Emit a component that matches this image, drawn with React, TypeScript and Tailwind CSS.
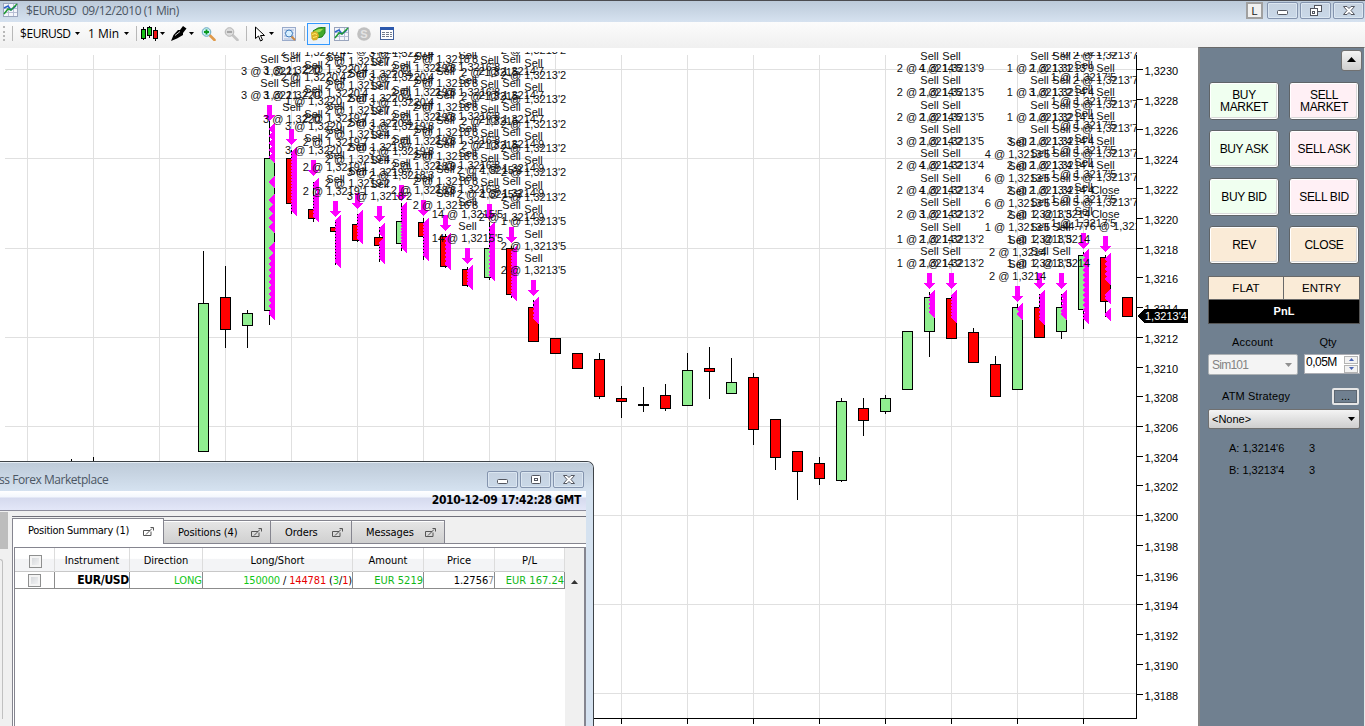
import React from "react";

type Candle = [x: number, top: number, bottom: number, wickTop: number, wickBottom: number, color: "g" | "r" | "k"];

const candles: Candle[] = [
  [203, 303, 452, 251, 452, "g"],
  [225, 297, 330, 266, 348, "r"],
  [247, 313, 326, 310, 348, "g"],
  [269, 158, 311, 121, 325, "g"],
  [291, 158, 204, 150, 214, "r"],
  [313, 209, 219, 182, 222, "r"],
  [335, 227, 232, 221, 265, "r"],
  [357, 224, 241, 214, 242, "r"],
  [379, 237, 246, 227, 262, "r"],
  [401, 221, 244, 203, 251, "g"],
  [423, 222, 237, 218, 260, "r"],
  [445, 236, 267, 234, 268, "r"],
  [467, 269, 286, 267, 287, "r"],
  [489, 248, 278, 222, 280, "g"],
  [511, 248, 295, 246, 298, "r"],
  [533, 307, 342, 300, 342, "r"],
  [555, 338, 354, 338, 354, "r"],
  [577, 353, 369, 353, 369, "r"],
  [599, 359, 397, 353, 399, "r"],
  [621, 398, 402, 386, 418, "r"],
  [643, 404, 406, 387, 412, "k"],
  [665, 395, 409, 384, 411, "r"],
  [687, 370, 406, 353, 406, "g"],
  [709, 368, 372, 347, 399, "r"],
  [731, 382, 394, 358, 394, "g"],
  [753, 377, 430, 373, 445, "r"],
  [775, 419, 458, 419, 470, "r"],
  [797, 451, 472, 451, 500, "r"],
  [819, 463, 479, 457, 485, "r"],
  [841, 401, 481, 398, 482, "g"],
  [863, 408, 421, 398, 436, "r"],
  [885, 398, 412, 395, 414, "g"],
  [907, 331, 390, 331, 390, "g"],
  [929, 297, 332, 292, 357, "g"],
  [951, 298, 339, 296, 339, "r"],
  [973, 332, 363, 328, 363, "r"],
  [995, 364, 397, 356, 397, "r"],
  [1017, 307, 390, 304, 390, "g"],
  [1039, 307, 338, 294, 338, "r"],
  [1061, 307, 332, 294, 339, "g"],
  [1083, 255, 310, 252, 329, "g"],
  [1105, 257, 302, 255, 317, "r"],
  [1127, 297, 317, 297, 317, "r"],
];

const fill = { g: "#90ee90", r: "#ff0000", k: "#000000" };

// labels are listed from the bottom one up, the last one repeats to the top of the chart
type Fill = { x: number; arrow: number; runs: [number, number, number][]; labels: string[]; max?: number };

const fills: Fill[] = [
  { x: 269, arrow: 105, runs: [[122, 164, 7], [175, 189, 8], [193, 234, 9], [241, 253, 8], [251, 321, 6]], labels: ["3 @ 1,3221"], max: 2 },
  { x: 291, arrow: 129, runs: [[146, 217, 3]], labels: ["3 @ 1,3220", "3 @ 1,3220", "3 @ 1,3220"], max: 3 },
  { x: 313, arrow: 160, runs: [[177, 194, 5], [190, 223, 3]], labels: ["3 @ 1,3220", "3 @ 1,3220", "1 @ 1,3220", "2 @ 1,3220'4"] },
  { x: 335, arrow: 201, runs: [[214, 269, 3]], labels: ["2 @ 1,3219'1", "2 @ 1,3219'1", "2 @ 1,3219'7", "2 @ 1,3219'7", "2 @ 1,3220'4"] },
  { x: 357, arrow: 193, runs: [[209, 245, 3]], labels: ["2 @ 1,3219'2", "2 @ 1,3219'4", "2 @ 1,3219'4", "2 @ 1,3219'7"] },
  { x: 379, arrow: 206, runs: [[222, 240, 5], [236, 265, 3]], labels: ["3 @ 1,3218'2", "3 @ 1,3219'7", "2 @ 1,3219'7", "2 @ 1,3220'4"] },
  { x: 401, arrow: 185, runs: [[201, 254, 3]], labels: ["2 @ 1,3218'3", "3 @ 1,3219'8", "3 @ 1,3219'8", "3 @ 1,3220'4"] },
  { x: 423, arrow: 200, runs: [[217, 262, 3]], labels: ["2 @ 1,3218'8", "2 @ 1,3218'9", "2 @ 1,3219'8"] },
  { x: 445, arrow: 215, runs: [[232, 271, 4]], labels: ["2 @ 1,3216'8", "2 @ 1,3216'8", "2 @ 1,3218'8"] },
  { x: 467, arrow: 248, runs: [[264, 291, 3]], labels: ["14 @ 1,3215'5", "14 @ 1,3215'5", "2 @ 1,3216'8"] },
  { x: 489, arrow: 204, runs: [[221, 282, 4]], labels: ["2 @ 1,3215'3", "2 @ 1,3215'3", "2 @ 1,3215"] },
  { x: 511, arrow: 227, runs: [[245, 302, 3]], labels: ["2 @ 1,3214'9", "2 @ 1,3214'9", "2 @ 1,3214'9", "2 @ 1,3214'9", "2 @ 1,3214'7"] },
  { x: 533, arrow: 280, runs: [[296, 325, 4]], labels: ["2 @ 1,3213'5", "2 @ 1,3213'5", "1 @ 1,3213'5", "2 @ 1,3213'2"] },
  { x: 929, arrow: 273, runs: [[289, 319, 4]], labels: ["1 @ 1,3214'2", "1 @ 1,3214'2", "2 @ 1,3214'2", "2 @ 1,3214'2", "2 @ 1,3214'2", "3 @ 1,3214'2", "2 @ 1,3214'5", "2 @ 1,3214'5", "2 @ 1,3214'5"] },
  { x: 951, arrow: 273, runs: [[289, 324, 3]], labels: ["2 @ 1,3213'2", "2 @ 1,3213'2", "3 @ 1,3213'2", "4 @ 1,3213'4", "4 @ 1,3213'4", "2 @ 1,3213'5", "2 @ 1,3213'5", "2 @ 1,3213'5", "4 @ 1,3213'9"] },
  { x: 1017, arrow: 286, runs: [[302, 321, 9]], labels: ["2 @ 1,3214", "2 @ 1,3214", "1 @ 1,3213'5", "6 @ 1,3213'5", "6 @ 1,3213'5", "4 @ 1,3213'5"], max: 6 },
  { x: 1039, arrow: 273, runs: [[289, 326, 4]], labels: ["1 @ 1,3213'5", "1 @ 1,3213'5", "2 @ 1,3213'5", "2 @ 1,3213'4", "2 @ 1,3213'4", "3 @ 1,3213'4", "1 @ 1,3213'2", "1 @ 1,3213'2", "1 @ 1,3213'1"] },
  { x: 1061, arrow: 273, runs: [[289, 321, 5]], labels: ["2 @ 1,3214", "2 @ 1,3214", "2 @ 1,3214", "2 @ 1,3214'4", "2 @ 1,3214'4", "2 @ 1,3214'4", "2 @ 1,3214'4", "3 @ 1,3214'4", "2 @ 1,3213'9"] },
  { x: 1083, arrow: 233, runs: [[248, 325, 5]], labels: ["1 @ 1,3217'5"] },
  { x: 1105, arrow: 236, runs: [[252, 286, 5], [288, 305, 6], [307, 322, 15]], labels: ["144.776 @ 1,3213'4", "5 @ 1,3213'7", "5 @ 1,3213'7", "5 @ 1,3213'7", "5 @ 1,3213'7", "5 @ 1,3213'7", "2 @ 1,3213'7"] },
];

const prices = Array.from({ length: 22 }, (_, i) => `1,${3230 - i * 2}`);
const gridX = Array.from({ length: 17 }, (_, i) => 27 + i * 66);
const gridY = [69, 158, 248, 337, 426, 515, 604, 693];

function Markers({ x, runs }: { x: number; runs: [number, number, number][] }) {
  const shapes: string[] = [];
  runs.forEach(([from, to, step]) => {
    const last = Math.max(from, to - 14);
    for (let y = from; y < last + step; y += step) {
      const top = Math.min(y, last);
      shapes.push(`M${x + 6} ${top}V${top + 14}L${x} ${top + 7}Z`);
    }
  });
  return <path d={shapes.join("")} fill="#ff00ff" />;
}

function Labels({ x, arrow, labels, max = 20 }: Fill) {
  const rows = [];
  for (let i = 0; i < max; i++) {
    const y = Math.round(arrow - 6 - i * 24.4);
    if (y < 54) break;
    const closing = x === 1105 && i < 2;
    rows.push(
      <g key={i}>
        <text x={x + 0.5} y={y}>{labels[Math.min(i, labels.length - 1)]}</text>
        {y - 12 > 53 && <text x={x + 0.5} y={y - 12}>{closing ? "Close" : "Sell"}</text>}
      </g>
    );
  }
  return <>{rows}</>;
}

function Chart() {
  return (
    <svg width="1198" height="679" viewBox="0 47 1198 679" className="block shrink-0 bg-white" fontFamily="Liberation Sans, sans-serif" fontSize="11" shapeRendering="crispEdges">
      <rect x="0" y="47" width="1198" height="1" fill="#f0f0f0" />
      <g fill="#e0e0e0">
        {gridX.map((x) => <rect key={x} x={x} y="55" width="1" height="663" />)}
        {gridY.map((y) => <rect key={y} x="5" y={y} width="1132" height="1" />)}
      </g>
      <rect x="71" y="459" width="1" height="3" />
      <rect x="93" y="457" width="1" height="5" />
      <clipPath id="plot">
        <rect x="0" y="52" width="1137" height="674" />
      </clipPath>
      <g clipPath="url(#plot)">
        {candles.map(([x, top, bottom, wickTop, wickBottom, color]) => (
          <g key={x}>
            <rect x={x} y={wickTop} width="1" height={wickBottom - wickTop} />
            <rect x={x - 4.5} y={top + 0.5} width="10" height={bottom - top - 1} fill={fill[color]} stroke="#000" />
          </g>
        ))}
        {fills.map((f) => (
          <g key={f.x}>
            <Markers x={f.x} runs={f.runs} />
            <path d={`M${f.x - 2} ${f.arrow}h5v10h3l-5.5 6l-5.5 -6h3z`} fill="#ff00ff" />
          </g>
        ))}
        <g textAnchor="middle" fill="#111">
          {fills.map((f) => <Labels key={f.x} {...f} />)}
        </g>
      </g>
      <rect x="1136" y="55" width="1" height="664" />
      <rect x="5" y="718" width="1132" height="1" />
      {gridX.map((x) => <rect key={x} x={x} y="718" width="1" height="6" />)}
      {prices.map((p, i) => {
        const y = Math.round(69.1 + i * 29.74);
        return (
          <g key={p}>
            <rect x="1137" y={y} width="6" height="1" />
            <text x="1144.500" y={y + 6}>{p}</text>
          </g>
        );
      })}
      <path d="M1137 316l8 -7h43v14h-43z" />
      <text x="1145" y="320" fill="#fff">1,3213'4</text>
    </svg>
  );
}

function ChartIcon() {
  return (
    <svg width="15" height="14" viewBox="0 0 15 14" className="shrink-0">
      <rect x=".5" y=".5" width="14" height="13" fill="#f4f6fb" stroke="#9aa5bd" />
      <path d="M1 5.500h13M1 9.500h13M5.500 1v12M10.500 1v12" stroke="#b9c0d6" />
      <path d="M1 5l4-2 3 4 5-4" stroke="#2c62c8" strokeWidth="1.500" fill="none" />
      <path d="M1 11l4-5 3 1 6-6" stroke="#209a32" strokeWidth="1.500" fill="none" />
    </svg>
  );
}

function Magnifier({ plus }: { plus?: boolean }) {
  return (
    <svg width="15" height="14" viewBox="0 0 15 14" className="shrink-0">
      <path d="M9 8.500l4.500 4.500" stroke={plus ? "#e09a4a" : "#c4c4c4"} strokeWidth="2.600" strokeLinecap="round" />
      <circle cx="5.500" cy="5" r="4.300" fill={plus ? "#c4ecf2" : "#dcdcdc"} stroke={plus ? "#6aa8c0" : "#b4b4b4"} />
      <path d={plus ? "M5.500 2.500v5M3 5h5" : "M3 5h5"} stroke={plus ? "#0a9a20" : "#a0a0a0"} strokeWidth="1.800" />
    </svg>
  );
}

function Caret() {
  return (
    <svg width="5" height="3" viewBox="0 0 5 3" className="shrink-0">
      <path d="M0 0h5L2.500 3z" />
    </svg>
  );
}

const Separator = () => <div className="h-[15px] w-px shrink-0 bg-[#b8b8b8]" />;

function WindowButton({ kind }: { kind: "min" | "max" | "restore" | "close" }) {
  return (
    <div className="flex h-[17px] w-[31px] items-center justify-center rounded-[2px] border border-[#8494ae] bg-gradient-to-b from-[#c6d2e0] to-[#c9d8e8] shadow-[inset_0_0_0_1px_#dbe6f1]">
      <svg width="12" height="11" viewBox="0 0 12 11" fill="#fff" stroke="#53565f">
        {kind === "min" && <rect x=".5" y="5.500" width="10" height="4" rx="1" />}
        {kind === "max" && (
          <>
            <rect x="1.500" y="1.500" width="9" height="8" rx="1" />
            <rect x="4.500" y="4.500" width="3" height="2" fill="none" />
          </>
        )}
        {kind === "restore" && (
          <>
            <rect x="4.500" y=".5" width="7" height="6" />
            <rect x=".5" y="3.500" width="7" height="7" />
            <rect x="2.500" y="6.500" width="2" height="2" />
          </>
        )}
        {kind === "close" && <path d="M.5 1.500h3.500l2 2 2-2h3.500l-3.500 4 3.500 4H8l-2-2-2 2H.5l3.500-4z" />}
      </svg>
    </div>
  );
}

function TitleBar() {
  return (
    <div className="flex h-[22px] shrink-0 items-start border-t border-[#4c4c50] bg-gradient-to-b from-[#bccad9] to-[#d6e2f0] font-['Open_Sans',sans-serif] text-[12px] text-[#4b5663]">
      <div className="pt-[2px] pl-[3px]"><ChartIcon /></div>
      <span className="ml-[8px] leading-[19px] tracking-[-0.45px] whitespace-pre">$EURUSD  09/12/2010 (1 Min)</span>
      <div className="ml-auto flex gap-[2px] pt-px pr-px">
        <div className="mr-[2px] h-[17px] w-[17px] border-2 border-[#a0a0a0] bg-[#f0f0f0] text-center font-['Liberation_Sans',sans-serif] text-[11px] leading-[14px] text-[#222]">L</div>
        <WindowButton kind="min" />
        <WindowButton kind="restore" />
        <WindowButton kind="close" />
      </div>
    </div>
  );
}

function Toolbar() {
  return (
    <div className="flex h-[25px] shrink-0 items-center bg-gradient-to-b from-[#fcfcfc] to-[#f0f0f0] pb-[2px] font-['Open_Sans',sans-serif] text-[12px] text-black">
      <div className="ml-[3px] h-[15px] w-[2px] border-l-2 border-dotted border-[#b8b8b8]" />
      <div className="ml-[7px]"><Separator /></div>
      <span className="ml-[7px] w-[50px] tracking-[-0.45px] whitespace-nowrap">$EURUSD</span>
      <div className="ml-[5px]"><Caret /></div>
      <span className="ml-[8px] w-[32px] whitespace-nowrap">1 Min</span>
      <div className="ml-[4px]"><Caret /></div>
      <div className="ml-[7px]"><Separator /></div>
      <svg width="17" height="15" viewBox="0 0 17 15" className="ml-[4px] shrink-0">
        <path d="M2.500 1v13M8.500 0v12M14.500 1v14" stroke="#000" />
        <rect x=".5" y="3.500" width="4" height="9" fill="#18c018" stroke="#000" />
        <rect x="6.500" y="1.500" width="4" height="8" fill="#18c018" stroke="#000" />
        <rect x="12.500" y="4.500" width="4" height="8" fill="#f01010" stroke="#000" />
      </svg>
      <div className="ml-[2px]"><Caret /></div>
      <svg width="16" height="15" viewBox="0 0 16 15" className="ml-[6px] shrink-0">
        <path d="M0 15l2.500-6L7 4l2 0 3-4 3.500 2.500L12 7l0 2-6 3.500z" />
        <path d="M4 9.500l5-4" stroke="#ccc" />
      </svg>
      <div className="ml-[2px]"><Caret /></div>
      <div className="ml-[7px]"><Magnifier plus /></div>
      <div className="ml-[8px]"><Magnifier /></div>
      <div className="ml-[7px]"><Separator /></div>
      <svg width="11" height="16" viewBox="0 0 11 16" className="ml-[7px] shrink-0">
        <path d="M1.500 1v11.500l3-2.500 2 5 2-1-2-4.500h4z" fill="#fff" stroke="#000" />
      </svg>
      <div className="ml-[4px]"><Caret /></div>
      <svg width="14" height="14" viewBox="0 0 14 14" className="ml-[8px] shrink-0">
        <rect x=".5" y=".5" width="13" height="13" fill="#e7eef9" stroke="#9aabcb" />
        <path d="M2 3h10M2 6h10M2 9h10M2 12h10" stroke="#a8b8d5" />
        <path d="M9 9l4 4" stroke="#c98742" strokeWidth="2" />
        <circle cx="7" cy="6.500" r="3.500" fill="#d8f0ff" stroke="#3c78ba" />
      </svg>
      <div className="ml-[8px]"><Separator /></div>
      <div className="ml-[2px] flex h-[22px] w-[23px] items-center justify-center border border-[#3399ff] bg-[#e9f2fc]">
        <svg width="15" height="14" viewBox="0 0 15 14">
          <path d="M2 4l5-3 7-1v6l-3 4-6 1z" fill="#42a82a" stroke="#1d7d18" />
          <path d="M3 4l5-2 4 0-3 3-5 1z" fill="#a5dc52" />
          <path d="M0 5.500l4-1.500 3 2 1 3-2 4-4 0.500-1.500-2z" fill="#d9ae28" />
          <path d="M1 7.500l3-1 2 1M2 10.500l4-1" stroke="#fff06a" fill="none" />
        </svg>
      </div>
      <div className="ml-[4px]"><ChartIcon /></div>
      <svg width="14" height="14" viewBox="0 0 14 14" className="ml-[8px] shrink-0">
        <circle cx="7" cy="7" r="6.800" fill="#c0c0c0" />
        <text x="7" y="11" textAnchor="middle" fontSize="11" fontFamily="Liberation Sans" fontWeight="bold" fill="#e4e4e4">S</text>
      </svg>
      <svg width="14" height="13" viewBox="0 0 14 13" className="ml-[9px] shrink-0">
        <rect x=".5" y=".5" width="13" height="12" fill="#fff" stroke="#42619c" />
        <rect x="0" y="0" width="14" height="3" fill="#2c58ac" />
        <path d="M2 5.500h3M6 5.500h3M10 5.500h2M2 7.500h3M6 7.500h3M10 7.500h2M2 9.500h3M6 9.500h3M10 9.500h2" stroke="#737c8c" />
      </svg>
    </div>
  );
}

function TradeButton({ label, color }: { label: string; color: string }) {
  return (
    <button className={`flex h-[38px] w-[70px] items-center justify-center rounded-[3px] border border-[#5f6468] text-center text-[12px] leading-[12px] tracking-[-0.35px] whitespace-pre shadow-[inset_0_0_0_1px_#fff,inset_-2px_-2px_0_#dadada] ${color}`}>
      {label}
    </button>
  );
}

const tradeButtons = [
  { label: "BUY\nMARKET", color: "bg-[#f0fff0]" },
  { label: "SELL\nMARKET", color: "bg-[#fff0f5]" },
  { label: "BUY ASK", color: "bg-[#f0fff0]" },
  { label: "SELL ASK", color: "bg-[#fff0f5]" },
  { label: "BUY BID", color: "bg-[#f0fff0]" },
  { label: "SELL BID", color: "bg-[#fff0f5]" },
  { label: "REV", color: "bg-[#faebd7]" },
  { label: "CLOSE", color: "bg-[#faebd7]" },
];

function TradePanel() {
  return (
    <div className="w-[167px] shrink-0 border-t border-r border-l-2 border-t-[#696969] border-r-[#e8e8e8] border-l-[#858585] bg-[#708090] pl-[8px] font-['Liberation_Sans',sans-serif] text-[11px] text-black">
      <div className="flex h-[34px] justify-end pt-[2px] pr-[2px]">
        <div className="flex h-[21px] w-[21px] items-center justify-center rounded-[3px] border border-[#707070] bg-gradient-to-b from-[#f4f4f4] to-[#cfcfcf] pb-[2px]">
          <svg width="9" height="5" viewBox="0 0 9 5"><path d="M4.500 0L9 5H0z" /></svg>
        </div>
      </div>
      <div className="grid w-[152px] grid-cols-[70px_70px] gap-[10px] pl-px">
        {tradeButtons.map((b) => <TradeButton key={b.label} {...b} />)}
      </div>
      <div className="mt-[12px] grid h-[24px] w-[152px] grid-cols-2 border border-[#696969] bg-[#faebd7] text-center text-[11.500px] leading-[22px]">
        <div className="border-r border-[#696969]">FLAT</div>
        <div>ENTRY</div>
      </div>
      <div className="h-[24px] w-[152px] border border-t-0 border-[#555] bg-black text-center text-[11px] leading-[23px] font-bold text-white">PnL</div>
      <div className="mt-[10px] flex h-[16px] w-[152px] items-center">
        <div className="w-[89px] text-center tracking-[0.15px]">Account</div>
        <div className="ml-[7px] w-[48px] text-center">Qty</div>
      </div>
      <div className="mt-[4px] flex h-[21px] w-[152px] items-start justify-between">
        <div className="flex h-[21px] w-[90px] items-center justify-between rounded-[2px] border border-[#adb2b5] bg-[#f4f4f4] pr-[5px] pl-[3px] text-[12px] tracking-[-0.75px] text-[#838383]">
          Sim101
          <svg width="7" height="4" viewBox="0 0 7 4" fill="#909090"><path d="M0 0h7L3.500 4z" /></svg>
        </div>
        <div className="flex h-[20px] w-[56px] items-center border border-[#abadb3] bg-white pl-[1px] text-[12px] tracking-[-0.5px]">
          <span className="-mt-[3px] grow leading-[15px]">0,05M</span>
          <div className="mr-px flex h-[17px] w-[14px] flex-col gap-px">
            <div className="flex h-[8px] items-center justify-center border border-[#b4b4b4] bg-[#f2f2f2]"><svg width="5" height="3" className="shrink-0" fill="#4a64b4"><path d="M2.500 0L5 3H0z" /></svg></div>
            <div className="flex h-[8px] items-center justify-center border border-[#b4b4b4] bg-[#f2f2f2]"><svg width="5" height="3" className="shrink-0" fill="#4a64b4"><path d="M0 0h5L2.500 3z" /></svg></div>
          </div>
        </div>
      </div>
      <div className="mt-[12px] flex h-[18px] w-[151px] items-center justify-between pl-[14px] text-[11px]">
        <span className="tracking-[0.15px]">ATM Strategy</span>
        <div className="h-[17px] w-[27px] rounded-[2px] border-2 border-[#e6e6e6] bg-[#708090] text-center leading-[12px] shadow-[inset_0_0_0_1px_#5d6772]">...</div>
      </div>
      <div className="mt-[4px] flex h-[20px] w-[152px] items-center justify-between rounded-[2px] border border-[#707070] bg-gradient-to-b from-[#f4f4f4] to-[#cecece] pr-[4px] pl-[3px]">
        &lt;None&gt;
        <svg width="7" height="4" viewBox="0 0 7 4"><path d="M0 0h7L3.500 4z" /></svg>
      </div>
      <div className="mt-[8px] grid grid-cols-[80px_1fr] pl-[21px] leading-[22px]">
        <span>A: 1,3214'6</span>
        <span>3</span>
        <span>B: 1,3213'4</span>
        <span>3</span>
      </div>
    </div>
  );
}

function PopOut() {
  return (
    <svg width="11" height="10" viewBox="0 0 11 10" fill="none" stroke="#555" className="shrink-0">
      <path d="M7 3.500H.5v5h7.500V4.500M3 7.500l6-6" />
      <path d="M7.500.5h3v3" />
    </svg>
  );
}

const tabs = [
  { label: "Positions (4)", width: "w-[107px]" },
  { label: "Orders", width: "w-[81px]" },
  { label: "Messages", width: "w-[93px]" },
];

const headers = ["Instrument", "Direction", "Long/Short", "Amount", "Price", "P/L"];
const cols = "grid grid-cols-[40px_75px_73px_150px_71px_71px_70px]";
const cell = "border-r border-[#8c8c8c] text-right";

function Checkbox() {
  return <div className="h-[13px] w-[13px] border border-[#8e8f8f] bg-gradient-to-br from-[#cfd2d6] to-[#f8f8f8] shadow-[inset_0_0_0_2px_#f4f4f4]" />;
}

function ForexWindow() {
  return (
    <div className="absolute top-[461px] left-0 flex h-[265px] w-[594px] flex-col overflow-hidden rounded-tr-[7px] border-t border-r border-[#3e4348] bg-[#d5e2f0] pr-[7px] font-['DejaVu_Sans_Condensed','DejaVu_Sans',sans-serif] text-[11px] text-black">
      <div className="-mr-[7px] flex h-[29px] shrink-0 items-start justify-between border-t border-[#e6eef5] bg-gradient-to-b from-[#becbd9] to-[#d5e2f0] pr-[9px]">
        <span className="-ml-[1px] pt-[8px] font-['Open_Sans',sans-serif] text-[12px] leading-[18px] tracking-[-0.45px] text-[#4b5663]">ss Forex Marketplace</span>
        <div className="flex gap-[2px] pt-[8px]">
          <WindowButton kind="min" />
          <WindowButton kind="max" />
          <WindowButton kind="close" />
        </div>
      </div>
      <div className="h-[20px] shrink-0 border-b border-[#8d8d9c] bg-[linear-gradient(#fff_0,#f3f7fd_6px,#d5daee_7px,#e3e7f8_100%)] pr-[5px] text-right text-[12px] leading-[19px] font-bold tracking-[-0.35px]">2010-12-09 17:42:28 GMT</div>
      <div className="flex grow bg-[#f0f0f0]">
        <div className="w-[12px] shrink-0">
          <div className="mt-[1px] h-[37px] w-[8px] bg-[#bdbdbd]" />
          <div className="mt-[10px] h-[160px] w-[3px] rounded-tr-[4px] border-t border-r border-[#c0c0c0]" />
        </div>
        <div className="flex grow flex-col">
          <div className="mt-[5px] h-[2px] border-t border-[#70707a]" />
          <div className="flex h-[26px] shrink-0 items-end">
            <div className="flex h-[26px] w-[152px] items-center justify-between border border-b-0 border-[#85858f] bg-white pr-[9px] pl-[15px]">
              <span className="tracking-[-0.28px] whitespace-nowrap">Position Summary (1)</span>
              <PopOut />
            </div>
            {tabs.map((t) => (
              <div key={t.label} className={`flex h-[24px] items-center justify-between border border-l-0 border-[#85858f] bg-gradient-to-b from-[#e6e6e6] to-[#d0d0d0] pt-[2px] pr-[8px] pl-[14px] shadow-[inset_0_1px_0_#fff] ${t.width}`}>
                <span className="tracking-[-0.1px] whitespace-nowrap">{t.label}</span>
                <PopOut />
              </div>
            ))}
            <div className="grow self-end border-b border-[#85858f]" />
          </div>
          <div className="flex grow border-l border-[#85858f] bg-white pt-[3px] pl-[1px]">
            <div className="flex grow border-t border-r-2 border-l border-[#85858f] bg-white">
              <div className="w-[550px] shrink-0">
                <div className={`h-[24px] border-b border-[#c8c8c8] bg-[linear-gradient(#fff_45%,#f3f4f6_50%,#f3f4f6)] text-center leading-[26px] ${cols}`}>
                  <div className="flex items-center justify-center border-r border-[#dcdcdc] pl-px"><Checkbox /></div>
                  {headers.map((h) => <div key={h} className="border-r border-[#dcdcdc]">{h}</div>)}
                </div>
                <div className={`h-[17px] border-b border-[#8c8c8c] leading-[17px] ${cols}`}>
                  <div className="flex items-center justify-center border-r border-[#8c8c8c]"><Checkbox /></div>
                  <div className={`${cell} text-[12px] font-bold tracking-[-0.3px]`}>EUR/USD</div>
                  <div className={`${cell} text-[#10c818]`}>LONG</div>
                  <div className={`${cell} tracking-[-0.15px]`}>
                    <span className="text-[#10c818]">150000</span> / <span className="text-[#e80000]">144781</span> (<span className="text-[#10c818]">3</span>/<span className="text-[#e80000]">1</span>)
                  </div>
                  <div className={`${cell} text-[#10b818]`}>EUR 5219</div>
                  <div className={cell}>1.2756<span className="text-[10px] text-[#888]">7</span></div>
                  <div className={`${cell} text-[#10b818]`}>EUR 167.24</div>
                </div>
              </div>
              <div className="flex grow flex-col items-center bg-[#f0f0f0]">
                <svg width="7" height="4" viewBox="0 0 7 4" className="mt-[32px]"><path d="M3.500 0L7 4H0z" fill="#333" /></svg>
              </div>
            </div>
          </div>
        </div>
      </div>
    </div>
  );
}

export default function App() {
  return (
    <div className="relative flex h-[726px] w-[1365px] flex-col overflow-hidden bg-white">
      <TitleBar />
      <Toolbar />
      <div className="flex grow">
        <Chart />
        <TradePanel />
      </div>
      <ForexWindow />
    </div>
  );
}
